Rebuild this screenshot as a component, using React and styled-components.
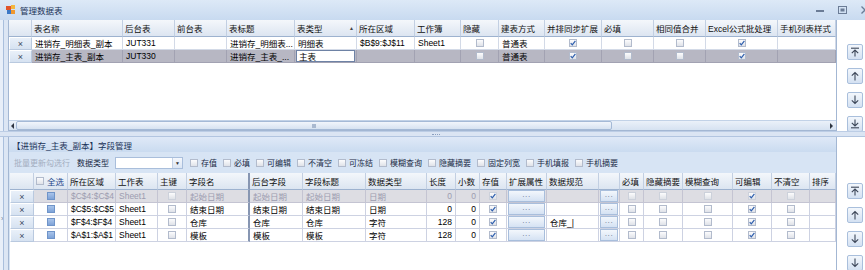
import React from 'react';
import styled, { createGlobalStyle } from 'styled-components';

const GlobalStyle = createGlobalStyle`
  html, body { margin: 0; padding: 0; background: #ffffff; }
  body {
    font-family: "Liberation Sans", "Noto Sans CJK SC", sans-serif;
    font-size: 8.5px;
    color: #000;
  }
  *, *::before, *::after { box-sizing: border-box; }
`;

const Frame = styled.div`
  width: 865px;
  height: 270px;
  overflow: hidden;
  display: flex;
  flex-direction: column;
  background: #fff;
`;

const TitleBar = styled.div`
  flex: none;
  height: 20px;
  display: flex;
  align-items: center;
  gap: 4px;
  padding-left: 6px;
  background: linear-gradient(#dde9f7, #c8daf0);
  color: #1b3358;
  font-size: 8.5px;
  overflow: hidden;
`;

const WinControls = styled.div`
  margin-left: auto;
  display: flex;
  align-items: center;
  gap: 14px;
  margin-right: -4px;
`;

const Section = styled.div`
  flex: none;
  height: ${p => p.$h}px;
  display: flex;
`;

const LeftFrame = styled.div`
  width: 8px;
  flex: none;
  display: flex;
  flex-direction: column;
  padding-top: ${p => p.$arrowTop || 0}px;
  background: linear-gradient(to right, #e8eff9 0 3px, #a9bfdd 3px 4px, #dce6f4 4px);
  color: #6c7d98;
  font-size: 7px;
  line-height: 7px;
`;

const TinyArrow = styled.span`
  padding-left: 1px;
  width: 3px;
  overflow: hidden;
`;

const Rail = styled.div`
  width: 28px;
  flex: none;
  display: flex;
  flex-direction: column;
  align-items: flex-start;
  gap: 8px;
  padding-top: ${p => p.$top}px;
  padding-left: 10px;
  background: #fff;
`;

const RailButton = styled.div`
  width: 16px;
  height: 16px;
  flex: none;
  display: flex;
  align-items: center;
  justify-content: center;
  border: 1px solid #a9bfdc;
  border-radius: 2px;
  background: linear-gradient(#f3f7fc, #d4e1f2);
`;

const GridBox = styled.div`
  width: 829px;
  flex: none;
  display: flex;
  flex-direction: column;
  border-left: 1px solid #a3b7d3;
  border-right: 1px solid #a3b7d3;
  background: #fff;
`;

const GridRow = styled.div`
  flex: none;
  display: grid;
  grid-template-columns: ${p => p.$cols};
  height: ${p => p.$h}px;
  background: ${p => p.$bg || '#fff'};
  color: ${p => p.$fg || '#000'};
`;

const HeadCell = styled.div`
  display: flex;
  align-items: center;
  gap: 3px;
  padding-left: 2px;
  padding-right: 2px;
  white-space: nowrap;
  overflow: hidden;
  background: linear-gradient(#f4f7fb, #dce5f1);
  border-right: ${p => (p.$frozen ? '2px solid #8796b2' : '1px solid #c2cfe2')};
  border-bottom: 1px solid #9db2cf;
  color: #111;
`;

const SortMark = styled.span`
  margin-left: auto;
  font-size: 5px;
  color: #444;
`;

const AllLabel = styled.span`
  color: #24468a;
`;

const Cell = styled.div`
  display: flex;
  align-items: center;
  justify-content: ${p => (p.$align === 'right' ? 'flex-end' : p.$align === 'center' ? 'center' : 'flex-start')};
  padding: 0 ${p => (p.$tight ? 1 : 3)}px;
  white-space: nowrap;
  overflow: hidden;
  border-right: ${p => (p.$frozen ? '2px solid #8796b2' : `1px solid ${p.$line}`)};
  border-bottom: 1px solid ${p => p.$line};
`;

const SelectorCell = styled.div`
  display: flex;
  align-items: center;
  justify-content: center;
  background: linear-gradient(#e9f0f9, #d6e2f1);
  border: 1px solid #ffffff;
  border-right-color: #b9c9df;
  border-bottom-color: #b9c9df;
  color: #3c4a62;
  font-size: 9px;
`;

const Editor = styled.span`
  flex: 1;
  height: 12px;
  display: flex;
  align-items: center;
  padding-left: 2px;
  background: #fff;
  border: 1px solid #6e82a5;
  color: #000;
`;

const CheckBox = styled.span`
  width: 8px;
  height: 8px;
  flex: none;
  display: inline-flex;
  align-items: center;
  justify-content: center;
  border: 1px solid ${p => (p.$dim ? '#ccd1db' : '#b2bbcc')};
  background: linear-gradient(#fcfcfd, #dfe2e8);
`;

const BlueSquare = styled.span`
  width: 8px;
  height: 8px;
  border: 1px solid #6f94c9;
  background: linear-gradient(#a9c4ea, #7ea3d8);
`;

const DotButton = styled.span`
  flex: 1;
  height: 12px;
  display: flex;
  align-items: center;
  justify-content: center;
  border: 1px solid #a8bedc;
  background: linear-gradient(#f3f7fc, #d5e2f3);
  color: #4b5d7c;
  font-size: 7px;
  letter-spacing: 0.5px;
`;

const Filler = styled.div`
  flex: 1;
  background: #fff;
`;

const HScroll = styled.div`
  flex: none;
  height: 11px;
  display: flex;
  align-items: center;
  background: linear-gradient(#ebf1f9, #d6e2f1);
  border-top: 1px solid #c2d2e7;
  border-bottom: 1px solid #a3b7d3;
`;

const TriLeft = styled.span`
  width: 0;
  height: 0;
  margin-left: 2px;
  border-top: 3px solid transparent;
  border-bottom: 3px solid transparent;
  border-right: 3px solid #2d3440;
`;

const TriRight = styled.span`
  width: 0;
  height: 0;
  margin-left: auto;
  margin-right: 3px;
  border-top: 3px solid transparent;
  border-bottom: 3px solid transparent;
  border-left: 3px solid #2d3440;
`;

const Thumb = styled.span`
  width: ${p => p.$w}px;
  height: 9px;
  margin-left: 2px;
  display: flex;
  align-items: center;
  justify-content: center;
  border: 1px solid #a4b9d6;
  border-radius: 2px;
  background: linear-gradient(#f1f5fb, #d6e2f1);
`;

const Grip = styled.span`
  width: 4px;
  height: 4px;
  background: #a9b9d0;
`;

const Splitter = styled.div`
  flex: none;
  height: 6px;
  display: flex;
  align-items: center;
  justify-content: center;
  padding-left: 6px;
  background: #dbe5f3;
  border-top: 1px solid #bccde5;
  border-bottom: 1px solid #b2c5e0;
`;

const SplitGrip = styled.span`
  width: 8px;
  border-top: 1px dotted #8b9fbf;
`;

const Panel = styled.div`
  width: 829px;
  flex: none;
  display: flex;
  flex-direction: column;
  border-left: 1px solid #a3b7d3;
  border-right: 1px solid #a3b7d3;
  background: #d6e3f3;
`;

const PanelTitle = styled.div`
  flex: none;
  height: 15px;
  display: flex;
  align-items: center;
  padding-left: 3px;
  background: linear-gradient(#dfe9f7, #cadbf0);
  color: #1b3358;
`;

const Toolbar = styled.div`
  flex: none;
  height: 21px;
  display: flex;
  align-items: center;
  padding-left: 5px;
  background: #d7e4f4;
  font-size: 8px;
`;

const ToolText = styled.span`
  color: ${p => (p.$muted ? '#a3adbf' : '#1a2a44')};
  margin-right: ${p => p.$mr || 0}px;
  white-space: nowrap;
`;

const Combo = styled.span`
  width: 68px;
  height: 12px;
  display: flex;
  justify-content: flex-end;
  margin-right: 7px;
  background: #fff;
  border: 1px solid #a9bedb;
`;

const ComboDrop = styled.span`
  width: 10px;
  display: flex;
  align-items: center;
  justify-content: center;
  border-left: 1px solid #c3d2e6;
  background: linear-gradient(#f4f7fc, #dbe5f3);
  color: #333;
  font-size: 5px;
`;

const ToolCheck = styled.label`
  display: flex;
  align-items: center;
  gap: 3px;
  margin-right: 6px;
  color: #1a2a44;
  white-space: nowrap;
`;

const LowerGrid = styled.div`
  flex: 1;
  display: flex;
  flex-direction: column;
  margin-left: 1px;
  background: #fff;
`;

function Check({ on, dim }) {
  return (
    <CheckBox $dim={dim}>
      {on && (
        <svg width="6" height="6" viewBox="0 0 6 6">
          <path d="M0.7 3.1 L2.3 4.8 L5.4 0.8" fill="none" stroke="#2e5fae" strokeWidth="1.2" />
        </svg>
      )}
    </CheckBox>
  );
}

function ArrowIcon({ kind }) {
  const s = { fill: 'none', stroke: '#3d4759', strokeWidth: 1.1 };
  if (kind === 'top')
    return (
      <svg width="10" height="10" viewBox="0 0 10 10">
        <path d="M1 1.2 H9" {...s} />
        <path d="M5 3 V9.5 M1.8 6.2 L5 3 L8.2 6.2" {...s} />
      </svg>
    );
  if (kind === 'up')
    return (
      <svg width="10" height="10" viewBox="0 0 10 10">
        <path d="M5 1.5 V9.5 M1.8 4.7 L5 1.5 L8.2 4.7" {...s} />
      </svg>
    );
  if (kind === 'down')
    return (
      <svg width="10" height="10" viewBox="0 0 10 10">
        <path d="M5 0.5 V8.5 M1.8 5.3 L5 8.5 L8.2 5.3" {...s} />
      </svg>
    );
  return (
    <svg width="10" height="10" viewBox="0 0 10 10">
      <path d="M5 0.5 V7 M1.8 3.8 L5 7 L8.2 3.8" {...s} />
      <path d="M1 8.8 H9" {...s} />
    </svg>
  );
}

function TitleIcon() {
  return (
    <svg width="10" height="10" viewBox="0 0 10 10">
      <rect x="0" y="1" width="5" height="4" fill="#e0542a" />
      <rect x="5" y="0" width="4" height="4" fill="#f4b63e" />
      <rect x="1" y="5" width="4" height="4" fill="#3b78c6" />
      <rect x="5" y="5" width="4" height="4" fill="#f09830" />
    </svg>
  );
}

const TOP_COLS = [23, 91, 52, 52, 68, 62, 58, 46, 38, 46, 57, 52, 52, 72, 58];
const TOP_HEAD = ['', '表名称', '后台表', '前台表', '表标题', '表类型', '所在区域', '工作簿', '隐藏', '建表方式', '并排同步扩展', '必填', '相同值合并', 'Excel公式批处理', '手机列表样式'];

const T = v => ({ t: 'text', v });
const C = on => ({ t: 'chk', on });

const TOP_ROWS = [
  {
    bg: '#ffffff', line: '#d3dae7',
    cells: [{ t: 'x' }, T('进销存_明细表_副本'), T('JUT331'), T(''), T('进销存_明细表...'), T('明细表'), T('$B$9:$J$11'), T('Sheet1'), C(false), T('普通表'), C(true), C(false), C(false), C(true), T('')],
  },
  {
    bg: '#b7b7c3', line: '#a2a2b2',
    cells: [{ t: 'x' }, T('进销存_主表_副本'), T('JUT330'), T(''), T('进销存_主表_...'), { t: 'edit', v: '主表' }, T(''), T(''), C(false), T('普通表'), C(true), C(false), C(false), C(true), T('')],
  },
];

const LOWER_COLS = [24, 34, 48, 42, 29, 63, 53, 63, 61, 29, 24, 27, 40, 52, 21, 24, 39, 50, 39, 38, 26];
const LOWER_HEAD = ['', 'ALL', '所在区域', '工作表', '主键', '字段名', '后台字段', '字段标题', '数据类型', '长度', '小数', '存值', '扩展属性', '数据规范', '', '必填', '隐藏摘要', '模糊查询', '可编辑', '不清空', '排序'];
const FROZEN = 5;

const FIELDS = [
  { dim: true, area: '$C$4:$C$4', name: '起始日期', type: '日期', len: '0', dec: '0', spec: '' },
  { area: '$C$5:$C$5', name: '结束日期', type: '日期', len: '0', dec: '0', spec: '' },
  { area: '$F$4:$F$4', name: '仓库', type: '字符', len: '128', dec: '0', spec: '仓库_|' },
  { area: '$A$1:$A$1', name: '模板', type: '字符', len: '128', dec: '0', spec: '' },
];

function fieldCells(f) {
  return [
    { t: 'x' }, { t: 'blue' }, T(f.area), T('Sheet1'), C(false), T(f.name), T(f.name), T(f.name), T(f.type),
    { t: 'num', v: f.len }, { t: 'num', v: f.dec }, C(true), { t: 'btn' }, T(f.spec), { t: 'btn' },
    C(false), C(false), C(false), C(true), C(false), T(''),
  ];
}

function renderCell(cell, i, line, dim, frozenIdx) {
  const frozen = i === frozenIdx;
  switch (cell.t) {
    case 'x':
      return <SelectorCell key={i}>×</SelectorCell>;
    case 'chk':
      return (
        <Cell key={i} $line={line} $align="center" $frozen={frozen}>
          <Check on={cell.on} dim={dim} />
        </Cell>
      );
    case 'blue':
      return (
        <Cell key={i} $line={line} $align="center">
          <BlueSquare />
        </Cell>
      );
    case 'btn':
      return (
        <Cell key={i} $line={line} $tight>
          <DotButton>···</DotButton>
        </Cell>
      );
    case 'edit':
      return (
        <Cell key={i} $line={line} $tight>
          <Editor>{cell.v}</Editor>
        </Cell>
      );
    case 'num':
      return (
        <Cell key={i} $line={line} $align="right">
          {cell.v}
        </Cell>
      );
    default:
      return (
        <Cell key={i} $line={line} $frozen={frozen}>
          {cell.v}
        </Cell>
      );
  }
}

const colsOf = arr => arr.map(w => `${w}px`).join(' ');

const TOOL_CHECKS = ['存值', '必填', '可编辑', '不清空', '可冻结', '模糊查询', '隐藏摘要', '固定列宽', '手机填报', '手机摘要'];

export default function App() {
  const topCols = colsOf(TOP_COLS);
  const lowCols = colsOf(LOWER_COLS);
  return (
    <>
      <GlobalStyle />
      <Frame>
        <TitleBar>
          <TitleIcon />
          <span>管理数据表</span>
          <WinControls>
            <svg width="8" height="8" viewBox="0 0 8 8">
              <rect x="0" y="4" width="8" height="2" fill="#6b7c96" />
            </svg>
            <svg width="9" height="8" viewBox="0 0 9 8">
              <rect x="0.5" y="0.5" width="8" height="7" fill="none" stroke="#6b7c96" />
              <rect x="2.5" y="2.5" width="4" height="3" fill="#6b7c96" />
            </svg>
            <svg width="8" height="8" viewBox="0 0 8 8">
              <path d="M0.5 0.5 L7.5 7.5 M7.5 0.5 L0.5 7.5" stroke="#6b7c96" strokeWidth="1.3" />
            </svg>
          </WinControls>
        </TitleBar>

        <Section $h={111}>
          <LeftFrame />
          <GridBox>
            <GridRow $cols={topCols} $h={17}>
              {TOP_HEAD.map((h, i) => (
                <HeadCell key={i} $frozen={false}>
                  {h}
                  {h === '表类型' && <SortMark>▲</SortMark>}
                </HeadCell>
              ))}
            </GridRow>
            {TOP_ROWS.map((r, ri) => (
              <GridRow key={ri} $cols={topCols} $h={13} $bg={r.bg}>
                {r.cells.map((c, i) => renderCell(c, i, r.line, false, -1))}
              </GridRow>
            ))}
            <Filler />
            <HScroll>
              <TriLeft />
              <Thumb $w={596}>
                <Grip />
              </Thumb>
              <TriRight />
            </HScroll>
          </GridBox>
          <Rail $top={24}>
            <RailButton><ArrowIcon kind="top" /></RailButton>
            <RailButton><ArrowIcon kind="up" /></RailButton>
            <RailButton><ArrowIcon kind="down" /></RailButton>
            <RailButton><ArrowIcon kind="bottom" /></RailButton>
          </Rail>
        </Section>

        <Splitter>
          <SplitGrip />
        </Splitter>

        <Section $h={133}>
          <LeftFrame $arrowTop={78}>
            <TinyArrow>›</TinyArrow>
          </LeftFrame>
          <Panel>
            <PanelTitle>【进销存_主表_副本】字段管理</PanelTitle>
            <Toolbar>
              <ToolText $muted $mr={7}>批量更新勾选行</ToolText>
              <ToolText $mr={6}>数据类型</ToolText>
              <Combo>
                <ComboDrop>▼</ComboDrop>
              </Combo>
              {TOOL_CHECKS.map(t => (
                <ToolCheck key={t}>
                  <Check on={false} />
                  {t}
                </ToolCheck>
              ))}
            </Toolbar>
            <LowerGrid>
              <GridRow $cols={lowCols} $h={17}>
                {LOWER_HEAD.map((h, i) => (
                  <HeadCell key={i} $frozen={i === FROZEN}>
                    {h === 'ALL' ? (
                      <>
                        <Check on={false} />
                        <AllLabel>全选</AllLabel>
                      </>
                    ) : (
                      h
                    )}
                  </HeadCell>
                ))}
              </GridRow>
              {FIELDS.map((f, ri) => (
                <GridRow
                  key={ri}
                  $cols={lowCols}
                  $h={13}
                  $bg={f.dim ? '#dddde3' : '#fff'}
                  $fg={f.dim ? '#9c9cb0' : '#000'}
                >
                  {fieldCells(f).map((c, i) => renderCell(c, i, f.dim ? '#c4c4d2' : '#cdd2e2', f.dim, FROZEN))}
                </GridRow>
              ))}
              <Filler />
            </LowerGrid>
          </Panel>
          <Rail $top={46}>
            <RailButton><ArrowIcon kind="top" /></RailButton>
            <RailButton><ArrowIcon kind="up" /></RailButton>
            <RailButton><ArrowIcon kind="down" /></RailButton>
            <RailButton><ArrowIcon kind="down" /></RailButton>
          </Rail>
        </Section>
      </Frame>
    </>
  );
}
